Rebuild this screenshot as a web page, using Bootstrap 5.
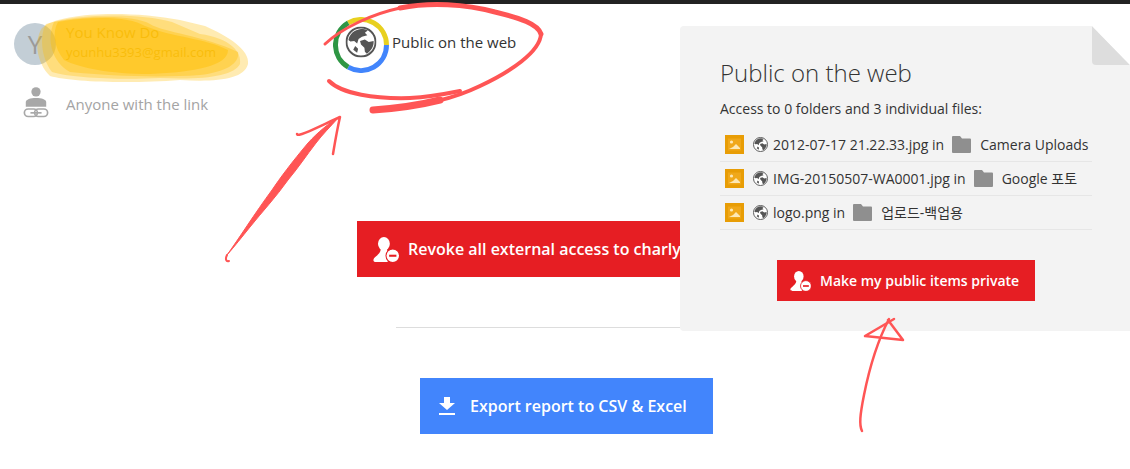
<!DOCTYPE html>
<html lang="en">
<head>
    <meta charset="UTF-8">
    <title>Public on the web</title>
    <link href="https://cdn.jsdelivr.net/npm/bootstrap@5.3.0/dist/css/bootstrap.min.css" rel="stylesheet">
    <style>
        html, body { height: 469px; overflow: hidden; }
        body { font-family: "Open Sans", "Noto Sans CJK KR", sans-serif; background: #fff; color: #333; }
        .top-strip { height: 4px; background: #222; }
        .page-wrap { position: relative; height: 465px; }
        .left-col { flex: 0 0 680px; width: 680px; }
        .header-row { height: 118px; }
        .user-col { width: 333px; padding: 19px 0 0 14px; }
        .user-row { gap: 10px; }
        .avatar { width: 42px; height: 42px; border-radius: 50%; background: #c3ced6; color: #9a9a9a; font-size: 26px; line-height: 42px; text-align: center; }
        .user-name { font-size: 15px; line-height: 20px; color: #d9b84a; margin-top: -1px; }
        .user-mail { font-size: 13px; line-height: 20px; color: #d9b84a; }
        .link-row { margin-top: 18px; padding-left: 9px; height: 40px; }
        .link-icon { margin-right: 17px; }
        .link-label { font-size: 15px; color: #a4a4a4; margin-top: 3px; }
        .public-col { padding-top: 13px; }
        .public-label { font-size: 15px; color: #333; margin-left: 3px; margin-top: -5px; }
        .btn-revoke { margin: 99px 0 0 357px; width: 420px; height: 56px; background: #e61e23; color: #fff; font-size: 16px; font-weight: 600; padding-left: 16px; white-space: nowrap; }
        .divider { margin: 50px 0 0 396px; height: 1px; background: #ddd; }
        .btn-export { margin: 50px 0 0 420px; width: 293px; height: 56px; background: #4285fc; color: #fff; font-size: 16px; font-weight: 600; padding-left: 18px; white-space: nowrap; position: relative; }
        .info-panel { position: relative; z-index: 1; flex: 0 0 450px; height: 305px; margin-top: 22px; background: #f3f3f3; border-radius: 4px 0 0 4px; padding: 32px 38px 0 40px; clip-path: polygon(0 0, 412px 0, 450px 39px, 450px 100%, 0 100%); }
        .fold { position: absolute; top: 0; right: 0; width: 38px; height: 39px; background: #ddd; border-radius: 0 0 0 4px; clip-path: polygon(0 0, 100% 100%, 0 100%); }
        .panel-title { font-size: 24px; font-weight: 300; line-height: 30px; color: #333; margin: 0; }
        .panel-sub { font-size: 14px; line-height: 20px; margin: 11px 0 9px; color: #333; }
        .file-row { height: 34px; border-bottom: 1px solid #e6e6e6; font-size: 14px; color: #333; padding-left: 5px; white-space: nowrap; }
        .file-type { width: 19px; height: 19px; margin-right: 9px; }
        .file-globe { width: 15px; height: 15px; margin-right: 5px; }
        .file-folder { width: 19px; height: 17px; margin: 0 9px 0 8px; }
        .btn-private { width: 258px; height: 41px; margin: 30px auto 0; background: #e61e23; color: #fff; font-size: 14px; font-weight: 600; padding-left: 13px; white-space: nowrap; }
        .marks { position: absolute; left: 0; top: -4px; z-index: 2; pointer-events: none; }
    </style>
</head>
<body>
    <svg width="0" height="0" class="d-block">
        <defs>
            <symbol id="globe" viewBox="0 0 32 32">
                <circle cx="16" cy="16" r="15" fill="#fff" stroke="#555" stroke-width="2"/>
                <path d="M3 14 C4 8 9 3 16 2.500 C19 2.500 21 3 23 4 L20 6.500 L22.500 9 L17 10.500 L13.500 13 L12 17.500 L9 15 L5 15.500Z" fill="#555"/>
                <path d="M15 15 L20 13.500 L24 16 L29 15 C29.500 20 27 25 22 28 L20 26 L19.500 22 L16 18.500Z" fill="#555"/>
                <path d="M10 20 L13 23 L12 27 L8 24Z" fill="#555"/>
            </symbol>
            <symbol id="person-minus" viewBox="0 0 25 24">
                <ellipse cx="10.500" cy="6.500" rx="5.700" ry="6.500" fill="#fff"/>
                <path d="M7.500 11 H13.500 C13.500 14 14.500 15 16 16 L14 24 H3 C0 24 0 22 1 20.500 C3 18 7.500 16 7.500 11Z" fill="#fff"/>
                <circle cx="19" cy="18" r="6.500" fill="#fff" stroke="#e61e23" stroke-width="1"/>
                <rect x="15.500" y="17" width="7" height="2" fill="#e61e23"/>
            </symbol>
            <symbol id="picture" viewBox="0 0 19 19">
                <rect width="19" height="19" fill="#e89d05"/>
                <rect x="3" y="3.500" width="13" height="12" fill="#f0a81a"/>
                <circle cx="6.500" cy="7" r="1.600" fill="#fde8b5"/>
                <path d="M4 14 L8 12 L11 9 L15 13 V14Z" fill="#fde8b5"/>
            </symbol>
            <symbol id="folder" viewBox="0 0 19 17">
                <path d="M1 0 H8 L10 2.500 H18 a1 1 0 0 1 1 1 V16 a1 1 0 0 1 -1 1 H1 a1 1 0 0 1 -1 -1 V1 a1 1 0 0 1 1 -1Z" fill="#8f8f8f"/>
            </symbol>
        </defs>
    </svg>

    <div class="top-strip"></div>
    <div class="page-wrap d-flex">
        <div class="left-col">
            <div class="header-row d-flex">
                <div class="user-col">
                    <div class="user-row d-flex">
                        <div class="avatar flex-shrink-0">Y</div>
                        <div>
                            <div class="user-name">You Know Do</div>
                            <div class="user-mail">younhu3393@gmail.com</div>
                        </div>
                    </div>
                    <div class="link-row d-flex align-items-center">
                        <svg class="link-icon" width="26" height="34" viewBox="0 0 28 36">
                            <circle cx="14" cy="6" r="5" fill="#a8a8a8"/>
                            <path d="M3 22 V17 C3 14 8 12.500 14 12.500 S25 14 25 17 V22Z" fill="#a8a8a8"/>
                            <rect x="1.500" y="24.500" width="14" height="8" rx="4" fill="none" stroke="#a8a8a8" stroke-width="1.800"/>
                            <rect x="12.500" y="24.500" width="14" height="8" rx="4" fill="none" stroke="#a8a8a8" stroke-width="1.800"/>
                            <rect x="8" y="27.700" width="12" height="1.800" fill="#a8a8a8"/>
                        </svg>
                        <span class="link-label">Anyone with the link</span>
                    </div>
                </div>
                <div class="public-col d-flex align-items-center align-self-start">
                    <svg width="56" height="56" viewBox="0 0 56 56">
                        <path d="M15.250 5.900 A25.500 25.500 0 0 1 53.500 28" fill="none" stroke="#e8d01f" stroke-width="5"/>
                        <path d="M53.500 28 A25.500 25.500 0 0 1 15.250 50.100" fill="none" stroke="#4285fc" stroke-width="5"/>
                        <path d="M15.250 50.100 A25.500 25.500 0 0 1 15.250 5.900" fill="none" stroke="#2e9644" stroke-width="5"/>
                        <use href="#globe" x="12.500" y="9.500" width="31" height="31"/>
                    </svg>
                    <span class="public-label">Public on the web</span>
                </div>
            </div>
            <div class="btn-revoke d-flex align-items-center">
                <svg class="flex-shrink-0" width="26" height="25" style="margin-right:9px"><use href="#person-minus"/></svg>
                <span>Revoke all external access to charly</span>
            </div>
            <div class="divider"></div>
            <div class="btn-export d-flex align-items-center">
                <svg class="flex-shrink-0" width="18" height="20" viewBox="0 0 18 20" style="margin-right:14px">
                    <path d="M6 1 H12 V7 H17 L9 14 L1 7 H6Z M1 17 H17 V19 H1Z" fill="#fff"/>
                </svg>
                <span>Export report to CSV &amp; Excel</span>
            </div>
        </div>

        <div class="info-panel">
            <div class="fold"></div>
            <h1 class="panel-title">Public on the web</h1>
            <p class="panel-sub">Access to 0 folders and 3 individual files:</p>
            <div class="file-row d-flex align-items-center">
                <svg class="file-type"><use href="#picture"/></svg>
                <svg class="file-globe"><use href="#globe"/></svg>
                <span>2012-07-17 21.22.33.jpg in</span>
                <svg class="file-folder"><use href="#folder"/></svg>
                <span>Camera Uploads</span>
            </div>
            <div class="file-row d-flex align-items-center">
                <svg class="file-type"><use href="#picture"/></svg>
                <svg class="file-globe"><use href="#globe"/></svg>
                <span>IMG-20150507-WA0001.jpg in</span>
                <svg class="file-folder"><use href="#folder"/></svg>
                <span>Google 포토</span>
            </div>
            <div class="file-row d-flex align-items-center">
                <svg class="file-type"><use href="#picture"/></svg>
                <svg class="file-globe"><use href="#globe"/></svg>
                <span>logo.png in</span>
                <svg class="file-folder"><use href="#folder"/></svg>
                <span>업로드-백업용</span>
            </div>
            <div class="btn-private d-flex align-items-center">
                <svg class="flex-shrink-0" width="21" height="20" style="margin-right:9px"><use href="#person-minus"/></svg>
                <span>Make my public items private</span>
            </div>
        </div>

        <!-- hand drawn annotations sit on top of the page -->
        <svg class="marks" width="1130" height="469" viewBox="0 0 1130 469" fill="none" stroke-linecap="round" stroke-linejoin="round">
            <g fill="#ffbe00">
                <path opacity=".3" d="M42 28 C58 12 130 10 180 20 L205 26 C228 36 250 50 248 64 C244 80 215 82 180 80 C130 84 70 82 50 76 C36 62 34 40 42 28Z"/>
                <path opacity=".3" d="M46 24 C80 13 140 13 172 22 L200 34 C230 38 242 52 240 64 C234 76 205 80 160 78 C120 80 70 78 52 72 C40 56 40 34 46 24Z"/>
                <path opacity=".35" d="M54 22 C90 15 135 15 150 24 C162 32 205 36 238 52 C240 64 225 72 200 75 C160 78 110 76 70 72 C52 62 46 40 54 22Z"/>
                <path opacity=".45" d="M58 22 C90 16 130 16 145 26 C175 38 205 38 228 50 C228 66 195 72 150 74 C110 74 80 68 64 60 C54 48 52 32 58 22Z"/>
            </g>
            <g stroke="#ff5555">
                <path stroke-width="3" d="M325 44 C342 28 372 14 400 8"/>
                <path stroke-width="5" d="M400 8 C430 2 465 4 495 12 C520 18 538 24 541 34"/>
                <path stroke-width="4" d="M541 34 C540 52 510 72 480 86 C455 98 430 105 373 110"/>
                <path stroke-width="7" d="M373 110 C395 108.500 420 105 440 100"/>
                <path stroke-width="4" d="M329 81 C342 94 375 99 410 98 C430 97 445 94 460 91"/>
                <path stroke-width="2.500" d="M297 134 C297 138 320 126 340 117 C337 130 335 142 333 154"/>
                <path stroke-width="1" fill="#ff5555" d="M227 255 C238 240 255 213 272 190 C280 178 292 162 308 143 C318 132 328 124 339 117 C330 127 322 135 316 143 C306 156 298 168 288 180 C276 197 262 212 250 227 C242 237 234 247 227 255Z"/>
                <path stroke-width="2" d="M227 255 C225 259 226 262 229 261"/>
                <path stroke-width="2.500" d="M862 431 C859 425 860 415 864 395 C869 370 878 340 889 319"/>
                <path stroke-width="2.500" d="M894 319 L865 336 L903 340 L888 320"/>
            </g>
        </svg>
    </div>
</body>
</html>
